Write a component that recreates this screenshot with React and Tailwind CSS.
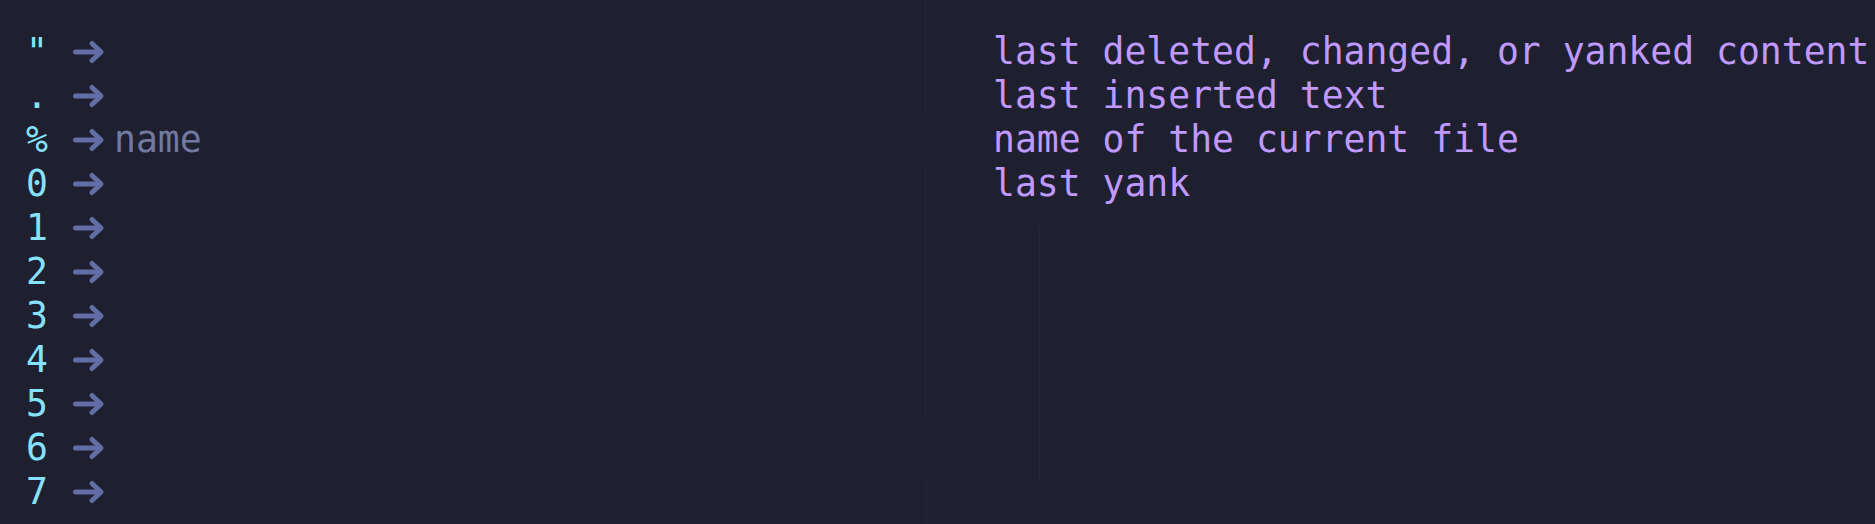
const registers = [
  { key: '"', desc: "last deleted, changed, or yanked content" },
  { key: ".", desc: "last inserted text" },
  { key: "%", hint: "name", desc: "name of the current file" },
  { key: "0", desc: "last yank" },
  { key: "1" },
  { key: "2" },
  { key: "3" },
  { key: "4" },
  { key: "5" },
  { key: "6" },
  { key: "7" },
];

const Arrow = () => (
  <svg width="44" height="44" viewBox="0 0 44 44" className="shrink-0">
    <g
      fill="none"
      stroke="#636da6"
      strokeWidth="5"
      strokeLinecap="round"
      strokeLinejoin="round"
    >
      <path d="M5.5 22 H30.5" />
      <path d="M22 13.5 L31 22 L22 30.5" />
    </g>
  </svg>
);

const App = () => {
  return (
    <div
      className="relative w-[1875px] h-[524px] overflow-hidden bg-[#1e2030] text-[36.4px] leading-[44px] whitespace-pre"
      style={{ fontFamily: '"DejaVu Sans Mono", "Liberation Mono", monospace' }}
    >
      {/* faint guide lines */}
      <div className="absolute left-[925px] top-0 h-[115px] w-px bg-[#24263a]" />
      <div className="absolute left-[925px] top-[163px] h-[254px] w-px bg-[#24263a]" />
      <div className="absolute left-[926px] top-[482px] h-[42px] w-px bg-[#24263a]" />
      <div className="absolute left-[1039px] top-[227px] h-[253px] w-px bg-[#24263a]" />

      <div className="flex pt-[30px]">
        <div className="w-[993px] shrink-0 pl-[26px] flex flex-col">
          {registers.map((r) => (
            <div key={r.key} className="flex items-center h-[44px]">
              <span className="w-[22px] text-center text-[#86e1fc]">{r.key}</span>
              <span className="w-[22px]" />
              <Arrow />
              {r.hint && <span className="text-[#737aa2]">{r.hint}</span>}
            </div>
          ))}
        </div>
        <div className="flex flex-col text-[#c099ff]">
          {registers
            .filter((r) => r.desc)
            .map((r) => (
              <div key={r.key} className="h-[44px]">
                {r.desc}
              </div>
            ))}
        </div>
      </div>
    </div>
  );
};

export default App;
